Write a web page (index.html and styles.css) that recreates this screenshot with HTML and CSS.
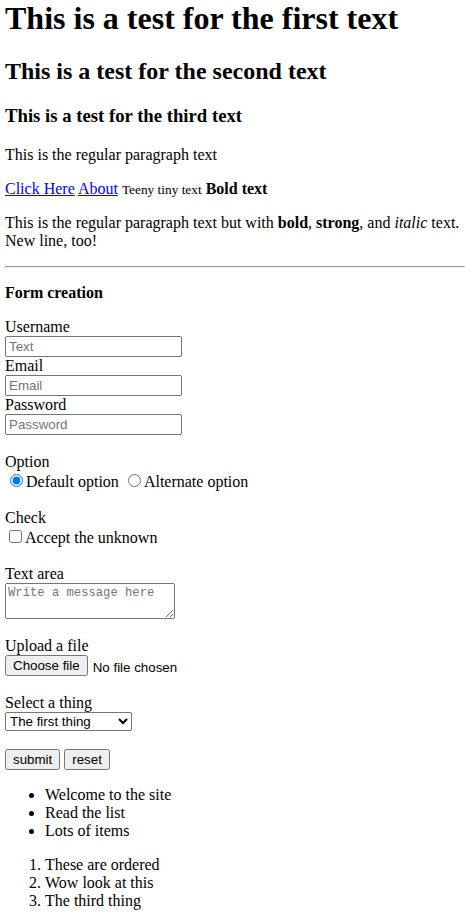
FILE: index.html
```html
<!DOCTYPE html>
<html>
<head>
<meta charset="utf-8">
<title>Test page</title>
<link rel="stylesheet" href="styles.css">
</head>
<body class="page">
<h1 class="title">This is a test for the first text</h1>
<h2>This is a test for the second text</h2>
<h3>This is a test for the third text</h3>
<p>This is the regular paragraph text</p>
<p><a href="#">Click Here</a> <a href="#">About</a> <small>Teeny tiny text</small> <b>Bold text</b></p>
<p>This is the regular paragraph text but with <b>bold</b>, <strong>strong</strong>, and <i>italic</i> text.<br>New line, too!</p>
<hr>
<form class="form">
<p><strong>Form creation</strong></p>
<label for="u">Username</label><br>
<input class="field" id="u" type="text" placeholder="Text"><br>
<label for="e">Email</label><br>
<input class="field" id="e" type="email" placeholder="Email"><br>
<label for="p">Password</label><br>
<input class="field" id="p" type="password" placeholder="Password"><br>
<br>
<label>Option</label><br>
<input type="radio" name="opt" id="r1" checked><label for="r1">Default option</label>
<input type="radio" name="opt" id="r2"><label for="r2">Alternate option</label><br>
<br>
<label>Check</label><br>
<input type="checkbox" id="c1"><label for="c1">Accept the unknown</label><br>
<br>
<label for="t">Text area</label><br>
<textarea class="area" id="t" placeholder="Write a message here"></textarea><br>
<br>
<label for="f">Upload a file</label><br>
<span class="file-field"><button type="button" class="btn file-btn" id="f">Choose file</button><span class="file-name">No file chosen</span></span><br>
<br>
<label for="s">Select a thing</label><br>
<select class="picker" id="s">
<option>The first thing</option>
<option>The second thing</option>
<option>The third thing</option>
</select><br>
<br>
<input class="btn" type="submit" value="submit"> <input class="btn" type="reset" value="reset">
</form>
<ul>
<li>Welcome to the site</li>
<li>Read the list</li>
<li>Lots of items</li>
</ul>
<ol>
<li>These are ordered</li>
<li>Wow look at this</li>
<li>The third thing</li>
</ol>
</body>
</html>
```
FILE: styles.css
```css
.page {
  margin: 0 0 8px 5px;
  font-family: "Liberation Serif", "Times New Roman", serif;
  font-size: 16px;
}
.title {
  margin-top: 0;
}
input, select, button {
  font-family: "Liberation Sans", Arial, sans-serif;
  font-size: 13.333px;
}
.field {
  box-sizing: border-box;
  width: 177px;
  height: 21px;
  font-size: 13.333px;
}
.area {
  box-sizing: border-box;
  width: 170px;
  height: 36px;
  font-family: "Liberation Mono", monospace;
  font-size: 12.2px;
  vertical-align: bottom;
}
.btn {
  box-sizing: border-box;
  height: 21px;
  padding: 1px 6px;
  white-space: nowrap;
  vertical-align: bottom;
}
.file-btn {
  margin-right: 5px;
}
.file-name {
  font-family: "Liberation Sans", Arial, sans-serif;
  font-size: 13.333px;
}
.picker {
  box-sizing: border-box;
  width: 127px;
  height: 19px;
}
```
